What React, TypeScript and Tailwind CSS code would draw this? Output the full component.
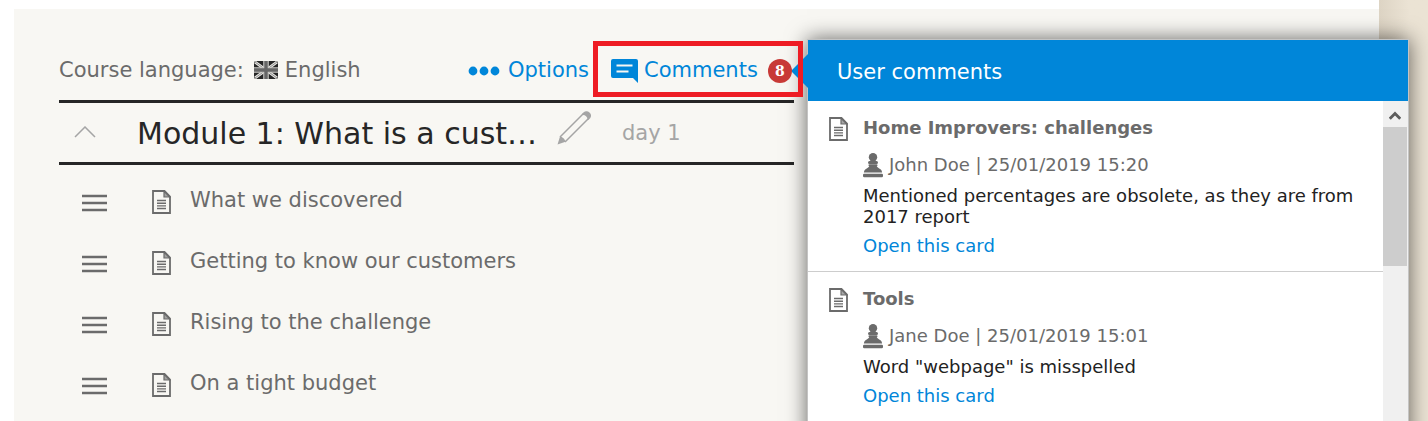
const lessons = [
  "What we discovered",
  "Getting to know our customers",
  "Rising to the challenge",
  "On a tight budget",
];

const comments = [
  {
    card: "Home Improvers: challenges",
    author: "John Doe",
    date: "25/01/2019 15:20",
    text: "Mentioned percentages are obsolete, as they are from 2017 report",
  },
  {
    card: "Tools",
    author: "Jane Doe",
    date: "25/01/2019 15:01",
    text: 'Word "webpage" is misspelled',
  },
];

const CardIcon = () => (
  <svg viewBox="0 0 19 24" className="h-6 w-[19px] shrink-0" fill="none" stroke="#6b6b6b" aria-hidden="true">
    <path d="M1 1h11.5l5.5 5.5V23H1z" strokeWidth="1.8" />
    <path d="M12 1v6h6z" fill="#6b6b6b" fillOpacity="0.6" strokeWidth="1.2" />
    <path d="M5 10.5h9M5 13.2h9M5 15.9h9M5 18.5h9" strokeWidth="1.4" />
  </svg>
);

const PawnIcon = () => (
  <svg viewBox="0 0 20 25" className="h-[25px] w-5 shrink-0" fill="#6b6b6b" aria-hidden="true">
    <circle cx="10" cy="4.3" r="4.2" />
    <rect x="5" y="8" width="10" height="3" rx="1.5" />
    <rect x="5.5" y="11.3" width="9" height="2" rx="1" />
    <path d="M6.500 12.500h7c.6 1.700 2 2.600 3.500 3.400 1.200.7 1.900 1.700 2.100 3.600H.9c.2-1.900.9-2.900 2.100-3.600 1.500-.8 2.900-1.700 3.500-3.400z" />
    <rect x="0" y="20.7" width="20" height="3.6" rx="1.2" />
  </svg>
);

const FlagIcon = () => (
  <svg viewBox="0 0 24 18" className="mb-0.5 h-[18px] w-6 shrink-0" aria-hidden="true">
    <rect width="24" height="18" rx="2" fill="#262626" />
    <path d="M1 1l22 16M23 1L1 17" stroke="#e6e5e1" strokeWidth="2.8" />
    <path d="M1 1l22 16M23 1L1 17" stroke="#777" strokeWidth=".8" />
    <path d="M12 0v18M0 9h24" stroke="#c9c8c4" strokeWidth="5.6" />
    <path d="M12 0v18M0 9h24" stroke="#666" strokeWidth="3.4" />
  </svg>
);

const PencilIcon = () => (
  <svg viewBox="0 0 34 34" className="h-[34px] w-[34px]" fill="none" stroke="#a5a5a5" strokeWidth="1.5" aria-hidden="true">
    <path d="M3 26L26.5 2.5M8 31L31.500 7.500" />
    <path d="M.5 33.5L3 25.5c2.500.3 5 2.800 5.500 5.300z" fill="#a5a5a5" stroke="none" />
    <path d="M26 3.2c1.600-2.600 4.200-2.800 6-1.200 1.900 1.700 1.700 4.200-.6 6-.5-2.500-2.500-4.600-5.400-4.800z" fill="#a5a5a5" />
  </svg>
);

const CommentsPopover = () => (
  <section
    aria-label="User comments"
    className="absolute top-[30px] -bottom-8 left-full z-10 ml-[13px] flex w-[602px] flex-col border border-[#c4c4c4] bg-white shadow-[0_0_20px_rgba(0,0,0,0.6)]"
  >
    <svg viewBox="0 0 17 34" className="absolute top-[14px] right-full h-[34px] w-[17px]" aria-hidden="true">
      <path d="M17 0v34L0 17z" fill="#0086d9" />
    </svg>
    <h2 className="flex h-[61px] shrink-0 items-center bg-[#0086d9] px-[29px] pt-1 text-[21px] text-white">
      User comments
    </h2>
    <div className="flex min-h-0 flex-1">
      <ul className="min-w-0 flex-1 overflow-hidden">
        {comments.map((c) => (
          <li key={c.card} className="flex gap-[15px] border-b border-[#cdcdcd] pt-4 pr-5 pb-[13px] pl-[21px]">
            <CardIcon />
            <div className="min-w-0 flex-1 text-lg">
              <h3 className="leading-[22px] font-bold text-[#6b6b6b]">{c.card}</h3>
              <p className="mt-3.5 flex h-6 items-center gap-1.5 leading-6 text-[#6b6b6b]">
                <PawnIcon />
                {c.author} | {c.date}
              </p>
              <p className="mt-2 leading-[21px] text-[#222]">{c.text}</p>
              <a href="#card" className="mt-[7px] block leading-6 text-[#0086d9]">
                Open this card
              </a>
            </div>
          </li>
        ))}
      </ul>
      {/* Scroll bar */}
      <div className="w-[25px] shrink-0 bg-[#f0f0f0] pr-px">
        <button type="button" aria-label="Scroll up" className="flex h-[26px] w-full items-center justify-center pt-0.5">
          <svg viewBox="0 0 12 10" className="h-2.5 w-3" fill="none" stroke="#5c5c5c" strokeWidth="2.8" aria-hidden="true">
            <path d="M.8 8.8L6 3.6 11.2 8.8" />
          </svg>
        </button>
        <div className="h-[139px] bg-[#cdcdcd]" />
      </div>
    </div>
  </section>
);

export default function App() {
  return (
    <div className="flex min-h-screen overflow-hidden bg-[#ebe3d4] font-['DejaVu_Sans',sans-serif]">
      <main className="relative z-10 flex min-w-0 flex-1 bg-white pt-[9px] pl-3.5">
        <div className="flex flex-1 bg-[#f8f7f3] pl-[45px]">
          <div className="relative w-[735px] shrink-0">
            <header className="flex items-center pt-8 pb-[3px] text-[21px]">
              <p className="flex items-center pt-1 text-[#6b6b6b]">
                Course language:
                <span className="ml-2.5 flex items-center gap-[7px]">
                  <FlagIcon />
                  English
                </span>
              </p>
              <button type="button" className="ml-auto flex items-center gap-2 pt-1 text-[#0086d9]">
                <svg viewBox="0 0 32 10" className="h-2.5 w-8" fill="#0086d9" aria-hidden="true">
                  <circle cx="5" cy="5" r="4.4" />
                  <circle cx="16" cy="5" r="4.4" />
                  <circle cx="27" cy="5" r="4.4" />
                </svg>
                Options
              </button>
              <button
                type="button"
                className="relative z-20 -mr-[9px] ml-1 flex h-14 w-[210px] items-center border-[5px] border-[#ee1c24] pt-1 pl-[13px] text-[#0086d9]"
              >
                <svg viewBox="0 0 27 24" className="h-6 w-[27px] shrink-0" aria-hidden="true">
                  <path d="M2 0h23a2 2 0 0 1 2 2v22l-5-5H2a2 2 0 0 1-2-2V2a2 2 0 0 1 2-2z" fill="#0086d9" />
                  <path d="M5.5 6.5h16M5.5 12.5h12" stroke="#f8f7f3" strokeWidth="2" />
                </svg>
                <span className="ml-1.5">Comments</span>
                <span className="ml-2.5 flex size-6 shrink-0 items-center justify-center rounded-full bg-[#c83a37] font-['DejaVu_Serif',serif] text-sm font-bold text-white">
                  8
                </span>
              </button>
            </header>

            <div className="flex h-[65px] items-center border-y-[3px] border-[#262626]">
              <button type="button" aria-label="Collapse module" className="ml-[15px] w-[63px]">
                <svg viewBox="0 0 22 13" className="h-[13px] w-[22px]" fill="none" stroke="#a5a5a5" strokeWidth="1.5" aria-hidden="true">
                  <path d="M1 11L11 1 21 11" />
                </svg>
              </button>
              <h1 className="w-[420px] pt-0.5 text-3xl whitespace-nowrap text-[#262626]">Module 1: What is a cust…</h1>
              <button type="button" aria-label="Rename module" className="-mt-2.5">
                <PencilIcon />
              </button>
              <span className="ml-[31px] pt-0.5 text-[21px] text-[#a5a5a5]">day 1</span>
            </div>

            <ul className="pt-1">
              {lessons.map((lesson) => (
                <li key={lesson} className="flex h-[61px] items-center pl-[23px] text-[21px] text-[#6b6b6b]">
                  <svg viewBox="0 0 25 18" className="mt-1.5 mr-[45px] h-[18px] w-[25px]" stroke="#6b6b6b" strokeWidth="2.4" aria-hidden="true">
                    <path d="M0 2h25M0 9h25M0 16h25" />
                  </svg>
                  <span className="mt-1 mr-[19px]">
                    <CardIcon />
                  </span>
                  <span className="pt-0.5">{lesson}</span>
                </li>
              ))}
            </ul>

            <CommentsPopover />
          </div>
        </div>
      </main>
      <div className="w-[49px] shrink-0 bg-linear-to-r from-[#ddd4c4] to-[#ebe3d4] to-60%" />
    </div>
  );
}
